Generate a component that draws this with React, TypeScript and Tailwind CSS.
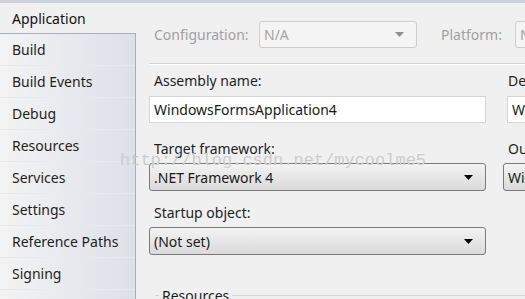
import React from 'react';

const sans = { fontFamily: '"Noto Sans", "Open Sans", sans-serif' };

const navItems: string[] = [
  'Build',
  'Build Events',
  'Debug',
  'Resources',
  'Services',
  'Settings',
  'Reference Paths',
  'Signing',
];

// Small black triangle used by the combo boxes
const Arrow: React.FC<{ color?: string }> = ({ color = '#000' }) => (
  <svg width="9" height="5" viewBox="0 0 9 5" className="shrink-0">
    <path d="M0 0 L9 0 L4.5 5 Z" fill={color} />
  </svg>
);

interface ComboProps {
  value: string;
  className?: string;
  disabled?: boolean;
}

const Combo: React.FC<ComboProps> = ({ value, className = '', disabled }) => (
  <div
    className={`shrink-0 flex items-center justify-between pl-[4px] pr-[12px] rounded-[3px] border ${
      disabled
        ? 'border-[#cdcdcd] bg-[#f4f4f4] text-[#a3a3a3]'
        : 'border-[#7a7a7a] bg-gradient-to-b from-[#f3f3f3] to-[#dadada] text-[#1a1a1a]'
    } ${className}`}
  >
    <span className="whitespace-nowrap">{value}</span>
    <Arrow color={disabled ? '#8f8f8f' : '#000'} />
  </div>
);

const TextBox: React.FC<{ value: string; className?: string }> = ({ value, className = '' }) => (
  <div className={`shrink-0 flex items-center pl-[4px] bg-white border border-[#d6d6d6] text-[#1a1a1a] ${className}`}>
    <span className="whitespace-nowrap">{value}</span>
  </div>
);

export default function App() {
  return (
    <div
      className="relative w-[525px] h-[299px] overflow-hidden bg-[#f0f0f0] text-[14px] text-[#1e1e1e] border-t-[3px] border-[#cdd1d9]"
      style={sans}
    >
      <div className="flex h-full">
        {/* Sidebar */}
        <div className="w-[136px] shrink-0 flex flex-col">
          <div className="h-[30px] shrink-0 pl-3 flex items-center text-[#111]">Application</div>
          <div className="flex-1 border-t border-r border-[#a8aebb] bg-gradient-to-r from-[#f3f3f3] to-[#dde0e8]">
            {navItems.map((item) => (
              <div
                key={item}
                className="h-[32px] pl-3 flex items-center border-b border-[#e8e9ec] whitespace-nowrap"
              >
                {item}
              </div>
            ))}
          </div>
        </div>

        {/* Main page */}
        <div className="flex-1 pl-[13px] pt-[18px] min-w-0 overflow-hidden">
          <div className="flex items-center h-[27px] text-[#a0a0a0]">
            <span className="w-[110px] shrink-0 pl-[5px] whitespace-nowrap">Configuration:</span>
            <Combo value="N/A" disabled className="w-[158px] h-[27px]" />
            <span className="ml-[24px] w-[74px] shrink-0 whitespace-nowrap">Platform:</span>
            <Combo value="N/A" disabled className="w-[120px] h-[27px]" />
          </div>

          <div className="mt-[15px] h-[1px] bg-[#d3d3d3] border-b border-white box-content" />

          <div className="flex mt-[5px]">
            <div className="w-[337px] shrink-0">
              <div className="h-[20px] pl-[5px] flex items-center">Assembly name:</div>
              <TextBox value="WindowsFormsApplication4" className="mt-[6px] h-[27px]" />
            </div>
            <div className="ml-[21px] shrink-0">
              <div className="h-[20px] pl-[1px] flex items-center">Default namespace:</div>
              <TextBox value="WindowsFormsApplication4" className="mt-[6px] h-[27px] w-[300px]" />
            </div>
          </div>

          <div className="flex mt-[15px]">
            <div className="w-[337px] shrink-0">
              <div className="h-[20px] pl-[5px] flex items-center">Target framework:</div>
              <Combo value=".NET Framework 4" className="mt-[5px] h-[28px]" />
            </div>
            <div className="ml-[17px] shrink-0">
              <div className="h-[20px] pl-[5px] flex items-center">Output type:</div>
              <Combo value="Windows Application" className="mt-[5px] h-[28px] w-[300px]" />
            </div>
          </div>

          <div className="w-[337px] mt-[11px]">
            <div className="h-[20px] pl-[5px] flex items-center">Startup object:</div>
            <Combo value="(Not set)" className="mt-[5px] h-[28px]" />
          </div>

          <div className="relative mt-[40px] ml-[6px] h-[1px] bg-[#d5d5d5]">
            <span className="absolute left-[4px] -top-[9px] px-[3px] bg-[#f0f0f0] leading-[20px]">Resources</span>
          </div>
        </div>
      </div>

      {/* watermark */}
      <div
        className="absolute left-[120px] top-[145px] text-[17px] text-[#cccccc] pointer-events-none whitespace-nowrap"
        style={{ fontFamily: '"Liberation Mono", monospace' }}
      >
        http://blog.csdn.net/mycoolme5
      </div>
    </div>
  );
}
